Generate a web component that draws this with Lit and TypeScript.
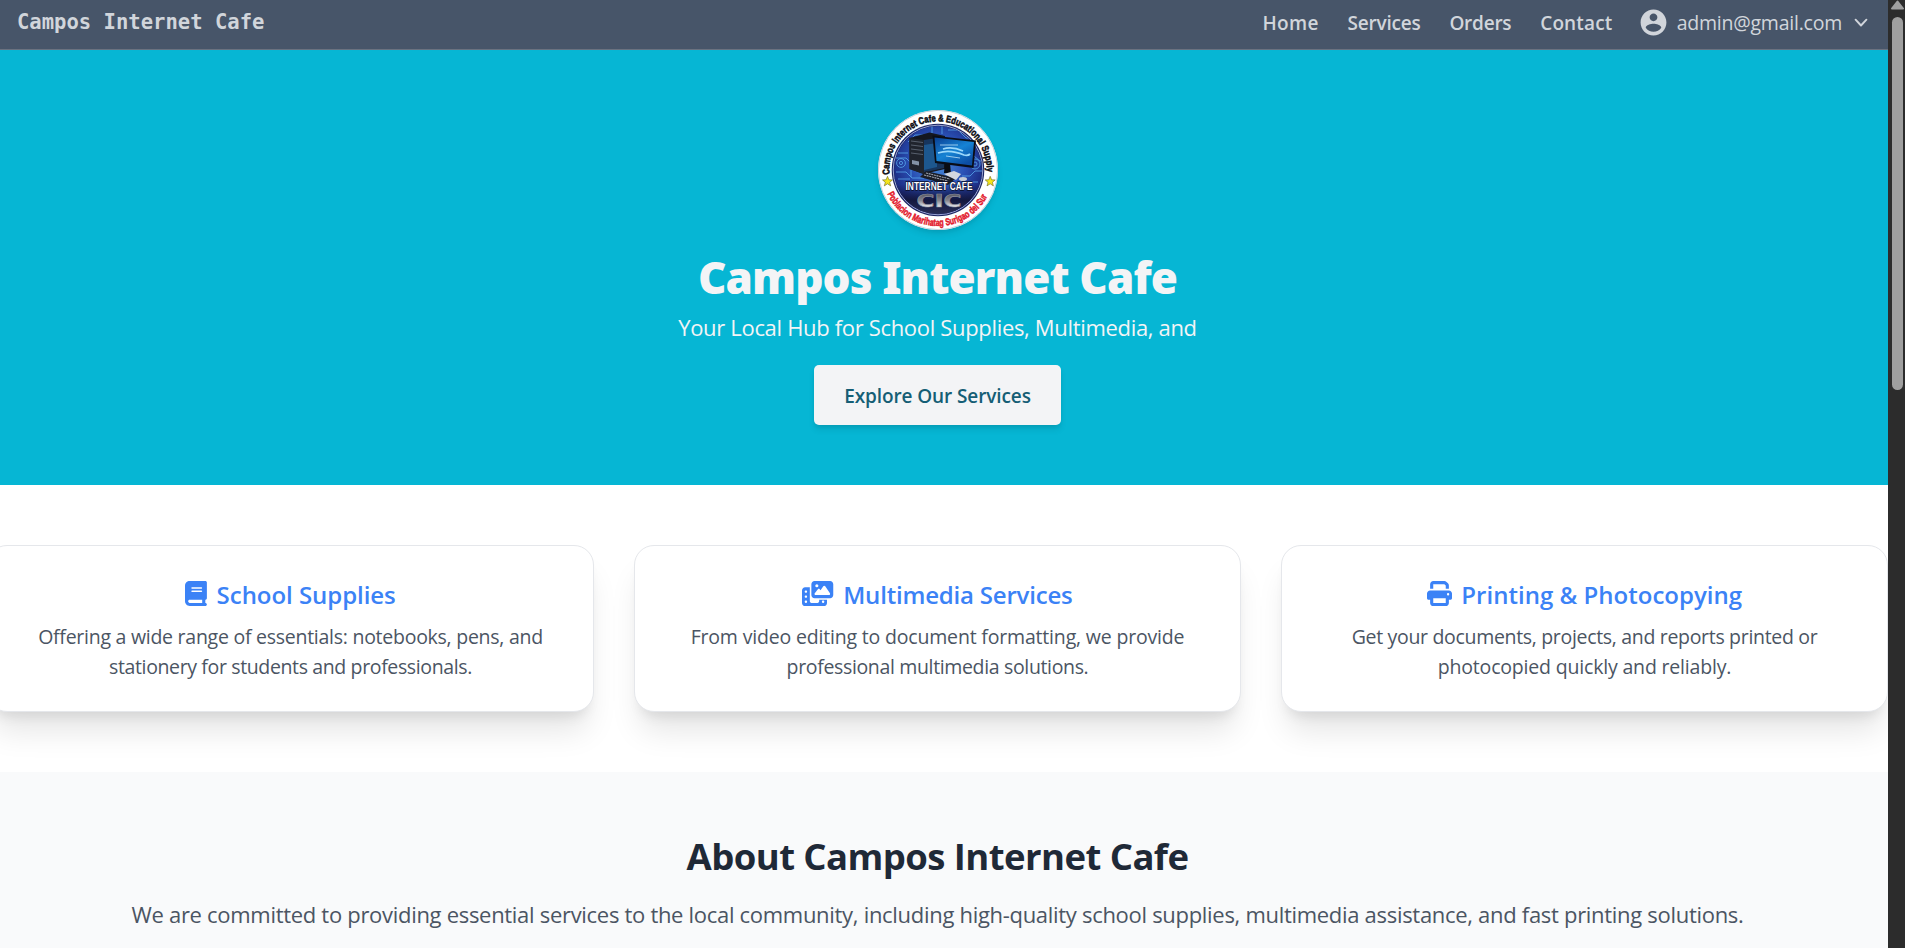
import { LitElement, html, css, svg } from "lit";
import { customElement } from "lit/decorators.js";
import { styleMap } from "lit/directives/style-map.js";

const pen = document.createElement("canvas").getContext("2d")!;

/* Sets one line of text, tracked so that it comes out at the given width. */
function line(text: string, width: number, font: string) {
  pen.font = font;
  const m = pen.measureText(text);
  const natural = m.actualBoundingBoxLeft + m.actualBoundingBoxRight;
  const spacing = ((width - natural) / (text.length - 1)).toFixed(3);
  return html`<span class="line" style=${styleMap({ letterSpacing: `${spacing}px` })}>${text}</span>`;
}

const body = '400 19.5px "Open Sans"';
const lead = '400 22px "Open Sans"';
const nav = '600 19px "Open Sans"';
const cardTitle = '600 24px "Open Sans"';

const links: [string, number][] = [
  ["Home", 55],
  ["Services", 73],
  ["Orders", 61],
  ["Contact", 70.5],
];

interface Service {
  title: string;
  titleWidth: number;
  viewBox: string;
  iconWidth: number;
  icon: string;
  lines: [string, number][];
}

const services: Service[] = [
  {
    title: "School Supplies",
    titleWidth: 177.5,
    viewBox: "0 0 448 512",
    iconWidth: 21.9,
    icon: "M96 0C43 0 0 43 0 96L0 416c0 53 43 96 96 96l288 0 32 0c17.7 0 32-14.3 32-32s-14.3-32-32-32l0-64c17.7 0 32-14.3 32-32l0-320c0-17.7-14.3-32-32-32L384 0 96 0zm0 384l256 0 0 64L96 448c-17.7 0-32-14.3-32-32s14.3-32 32-32zm32-240c0-8.8 7.2-16 16-16l192 0c8.8 0 16 7.2 16 16s-7.2 16-16 16l-192 0c-8.8 0-16-7.2-16-16zm16 48l192 0c8.8 0 16 7.2 16 16s-7.2 16-16 16l-192 0c-8.8 0-16-7.2-16-16s7.2-16 16-16z",
    lines: [
      ["Offering a wide range of essentials: notebooks, pens, and", 503],
      ["stationery for students and professionals.", 362.2],
    ],
  },
  {
    title: "Multimedia Services",
    titleWidth: 226.9,
    viewBox: "0 0 640 512",
    iconWidth: 31.25,
    icon: "M256 0H576c35.3 0 64 28.7 64 64V288c0 35.3-28.7 64-64 64H256c-35.3 0-64-28.7-64-64V64c0-35.3 28.7-64 64-64zM476 106.7C471.5 100 464 96 456 96s-15.5 4-20 10.7l-56 84L362.7 169c-4.6-5.7-11.5-9-18.7-9s-14.2 3.3-18.7 9l-64 80c-5.8 7.2-6.9 17.1-2.9 25.4s12.4 13.6 21.6 13.6h80 48H552c8.9 0 17-4.9 21.2-12.7s3.7-17.3-1.2-24.6l-96-144zM336 96a32 32 0 1 0 -64 0 32 32 0 1 0 64 0zM64 128h96V384v32c0 17.7 14.3 32 32 32H320c17.7 0 32-14.3 32-32V384H512v64c0 35.3-28.7 64-64 64H64c-35.3 0-64-28.7-64-64V192c0-35.3 28.7-64 64-64zm8 64c-8.8 0-16 7.2-16 16v16c0 8.8 7.2 16 16 16H88c8.8 0 16-7.2 16-16V208c0-8.8-7.2-16-16-16H72zm0 104c-8.8 0-16 7.2-16 16v16c0 8.8 7.2 16 16 16H88c8.8 0 16-7.2 16-16V312c0-8.8-7.2-16-16-16H72zm0 104c-8.8 0-16 7.2-16 16v16c0 8.8 7.2 16 16 16H88c8.8 0 16-7.2 16-16V416c0-8.8-7.2-16-16-16H72zm336 16v16c0 8.8 7.2 16 16 16h16c8.8 0 16-7.2 16-16V416c0-8.8-7.2-16-16-16H424c-8.8 0-16 7.2-16 16z",
    lines: [
      ["From video editing to document formatting, we provide", 491.9],
      ["professional multimedia solutions.", 300],
    ],
  },
  {
    title: "Printing & Photocopying",
    titleWidth: 278.5,
    viewBox: "0 0 512 512",
    iconWidth: 25,
    icon: "M128 0C92.7 0 64 28.7 64 64v96h64V64H354.7L384 93.3V160h64V93.3c0-17-6.7-33.3-18.7-45.3L400 18.7C388 6.7 371.7 0 354.7 0H128zM384 352v32 64H128V384 368 352H384zm64 32h32c17.7 0 32-14.3 32-32V256c0-35.3-28.7-64-64-64H64c-35.3 0-64 28.7-64 64v96c0 17.7 14.3 32 32 32H64v64c0 35.3 28.7 64 64 64H384c35.3 0 64-28.7 64-64V384zM432 248a24 24 0 1 1 0 48 24 24 0 1 1 0-48z",
    lines: [
      ["Get your documents, projects, and reports printed or", 465],
      ["photocopied quickly and reliably.", 291.5],
    ],
  },
];

@customElement("cafe-logo")
class CafeLogo extends LitElement {
  static styles = css`
    :host { display: block; width: 120px; height: 120px; border-radius: 50%;
      box-shadow: 0 5px 7.5px -1.25px rgba(0,0,0,.1), 0 2.5px 5px -2.5px rgba(0,0,0,.1); }
    svg { display: block; }
    .ring { font: 700 9.8px "Liberation Sans", sans-serif; }
    .top { fill: #0b0b12; stroke: #0b0b12; stroke-width: .55; }
    .bottom { fill: #e3182b; stroke: #e3182b; stroke-width: .5; }
    .name { font: 700 10.5px "Liberation Sans", sans-serif; fill: #fff; stroke: #0a0d2a; stroke-width: 1.4; paint-order: stroke; }
    .cic { font: 700 18.5px "DejaVu Sans", sans-serif; fill: url(#silver); stroke: #8d8f9c; stroke-width: .6; }
  `;
  render() {
    const star = "M0-5.2 1.4-1.7 5-1.6 2.2.8 3.2 4.4 0 2.3-3.2 4.4-2.2.8-5-1.6-1.4-1.7Z";
    return html`<svg width="120" height="120" viewBox="0 0 120 120">
      <defs>
        <radialGradient id="core" cx=".5" cy=".42" r=".58">
          <stop offset="0" stop-color="#4a90de" /><stop offset=".55" stop-color="#2a50b4" /><stop offset="1" stop-color="#1a2478" />
        </radialGradient>
        <linearGradient id="floor" x2="0" y2="1">
          <stop offset="0" stop-color="#12194a" stop-opacity="0" /><stop offset=".5" stop-color="#14183f" /><stop offset="1" stop-color="#2b3158" />
        </linearGradient>
        <linearGradient id="screen" x2=".7" y2="1">
          <stop offset="0" stop-color="#0a3f93" /><stop offset=".55" stop-color="#1683d4" /><stop offset="1" stop-color="#0c4da3" />
        </linearGradient>
        <linearGradient id="silver" x2="0" y2="1">
          <stop offset="0" stop-color="#3b3c47" /><stop offset=".5" stop-color="#85868f" /><stop offset=".8" stop-color="#e8e8ec" /><stop offset="1" stop-color="#92939c" />
        </linearGradient>
        <clipPath id="disc"><circle cx="60" cy="60" r="44" /></clipPath>
        <path id="over" d="M11.500 64.500A48.700 48.700 0 1 1 108.500 64.500" />
        <path id="under" d="M9.200 83.700A56 56 0 0 0 109.900 85.400" />
      </defs>
      <circle cx="60" cy="60" r="60" fill="#fff" />
      <circle cx="60" cy="60" r="59.600" fill="none" stroke="#b9c4cf" stroke-width=".8" />
      <circle cx="60" cy="60" r="46.300" fill="#1c2563" />
      <circle cx="60" cy="60" r="44.800" fill="none" stroke="#aab6e2" stroke-width=".9" />
      <g clip-path="url(#disc)">
        <circle cx="60" cy="60" r="44" fill="url(#core)" />
        <g fill="none" stroke="#5fb3f4" stroke-width=".9" opacity=".8">
          <path d="M16 48h12l5 5v14M18 62h10l6 6h12M20 43h10M88 46h8l6 5h4M84 66h8l5-5h9M30 32l7-7h8M70 20h10l8 8h6M64 16v8M54 16v7M88 72h12M20 69h12" />
          <circle cx="23" cy="53" r="4.400" /><circle cx="23" cy="53" r="1.600" />
          <circle cx="97" cy="54" r="5" /><circle cx="97" cy="54" r="2" />
        </g>
        <path d="M14 74h92v32H14z" fill="url(#floor)" />
      </g>
      <path d="m31.500 28 20-5.500L67 26v33L45.500 64 31.500 59Z" fill="#14171f" />
      <path d="m46 30 20-3v31L46 62.500Z" fill="#17355d" />
      <path d="m46 35 13-2v24l-13 3Z" fill="#2166a4" opacity=".7" />
      <path d="m31.500 28 14.500 2v34l-14.500-5Z" fill="#20242d" />
      <path d="m33 31 12 1.500M33 35l12 1.500M33 39l12 1.500M33 43l12 1.500" stroke="#5d6675" stroke-width=".9" />
      <path d="m34 50 7 1.500v4L34 54Z" fill="#8493a7" />
      <path d="m67 52 5 1 1 11-7-1Z" fill="#090c13" />
      <path d="m54.500 25.500 43.500 5-2.500 27.500-38.500-5Z" fill="#090d17" />
      <path d="m56.500 27.500 39.500 4.500-2 23.500-35.500-4.500Z" fill="url(#screen)" />
      <path d="M65 39q9-3 20 2M60 43q12-4 26 2 4 1 6-1" stroke="#9bd8fb" stroke-width="1.800" fill="none" />
      <path d="M62 35h18M68 46l14 2" stroke="#d2f0ff" stroke-width="1" opacity=".7" />
      <path d="m48 61 30 7-8 7-28-8Z" fill="#1a1d27" />
      <path d="m48 63 24 6M46 65l24 6" stroke="#9da3b0" stroke-width="1.100" stroke-dasharray="2 .7" />
      <path d="m66 64 10-3 7 3-5 6Z" fill="#d3d7df" />
      <ellipse cx="85" cy="69" rx="4" ry="2" fill="#c5cbd6" />
      <text class="name" x="27.500" y="79.800" textLength="67" lengthAdjust="spacingAndGlyphs">INTERNET CAFE</text>
      <text class="cic" x="38.500" y="97" textLength="45" lengthAdjust="spacingAndGlyphs">CIC</text>
      <text class="ring top"><textPath href="#over" textLength="159" lengthAdjust="spacingAndGlyphs">Campos Internet Cafe &amp; Educational Supply</textPath></text>
      <text class="ring bottom"><textPath href="#under" textLength="124" lengthAdjust="spacingAndGlyphs">Poblacion Marihatag Surigao del Sur</textPath></text>
      ${[[9.5, 71.5], [112.2, 71.5]].map(
        ([x, y]) => svg`<path d=${star} transform="translate(${x} ${y})" fill="#f5e51b" stroke="#6a6722" stroke-width=".6" />`
      )}
    </svg>`;
  }
}

@customElement("app-root")
class AppRoot extends LitElement {
  static styles = css`
    :host { display: flex; height: 948px; overflow: hidden; font-family: "Open Sans", "Noto Sans", sans-serif; background: #fff; }
    * { box-sizing: border-box; }
    h1, h2, h3, p { margin: 0; }
    svg { display: block; flex: none; }
    .line { white-space: nowrap; }
    .viewport { flex: 1; min-width: 0; overflow: hidden; }
    .page { width: 1901px; margin-left: -13px; text-align: center; }

    .nav { display: flex; align-items: center; justify-content: space-between; height: 50px; padding: 0 17px 2px 30px;
      background: #475569; border-bottom: 1px solid #6b7280; color: #d1d5db; }
    .brand { font: 700 20.55px/30px "DejaVu Sans Mono", monospace; padding-bottom: 3px; }
    .menu { display: flex; align-items: center; gap: 28.8px; padding-bottom: 1px; font-size: 19px; line-height: 30px; font-weight: 600; }
    .user { display: flex; align-items: center; margin-left: -3.5px; font-weight: 400; font-size: 19.5px; }
    .user .line { margin: 0 9px 0 8px; }
    .menu a { color: inherit; text-decoration: none; }
    .avatar { margin-bottom: 1px; }

    .hero { display: flex; flex-direction: column; align-items: center; height: 435px; padding: 60px 0; background: #06b6d4; color: #f3f4f6; }
    .hero h1 { height: 50px; margin-top: 20px; font: 900 44px/54px "Noto Sans", sans-serif; }
    .hero p { margin-top: 10px; font-size: 22px; line-height: 35px; }
    .cta { display: flex; align-items: center; justify-content: center; margin-top: 20px; width: 247px; height: 60px; padding: 2px 0 0; border: 0; border-radius: 5px;
      background: #f3f4f6; color: #155e75; font: 600 19px/30px "Open Sans", sans-serif;
      box-shadow: 0 5px 7.5px -1.25px rgba(0,0,0,.1), 0 2.5px 5px -2.5px rgba(0,0,0,.1); }

    .services { display: grid; grid-template-columns: repeat(3, 607px); gap: 40px; padding: 60px 0; background: #fff; }
    .card { height: 167px; padding: 30px 0; border: 1px solid #e5e7eb; border-radius: 20px; background: #fff;
      box-shadow: 0 25px 31.25px -6.25px rgba(0,0,0,.1), 0 10px 12.5px -7.5px rgba(0,0,0,.1); }
    .card h3 { display: flex; align-items: center; justify-content: center; gap: 9.5px; height: 35px; color: #3b82f6; font-size: 24px; line-height: 35px; font-weight: 600; }
    .card h3 .line { padding-top: 1px; }
    .card p { margin-top: 11px; color: #4b5563; font-size: 19.5px; line-height: 30px; }
    .card p .line { display: block; }

    .about { height: 176px; padding: 60px 0 0; background: #f9fafb; }
    .about h2 { color: #1f2937; font-size: 36.5px; line-height: 49px; height: 45px; font-weight: 700; }
    .about p { margin-top: 20px; color: #4b5563; font-size: 22px; line-height: 35px; }

    .scrollbar { display: flex; flex-direction: column; align-items: center; width: 17px; flex: none; background: #2c2c2c; padding-left: 1px; }
    .thumb { width: 11px; height: 373px; margin-top: 7px; border-radius: 6px; background: #9f9f9f; }
  `;

  render() {
    return html`
      <div class="viewport"><div class="page">
        <header class="nav">
          <div class="brand">Campos Internet Cafe</div>
          <nav class="menu">
            ${links.map(([t, w]) => html`<a>${line(t, w, nav)}</a>`)}
            <div class="user">
              <svg class="avatar" width="31" height="31" viewBox="0 0 24 24" fill="currentColor"><path d="M12 2C6.480 2 2 6.480 2 12s4.480 10 10 10 10-4.480 10-10S17.520 2 12 2zm0 3c1.660 0 3 1.340 3 3s-1.340 3-3 3-3-1.340-3-3 1.340-3 3-3zm0 14.200c-2.500 0-4.710-1.280-6-3.220.03-1.990 4-3.080 6-3.080 1.990 0 5.970 1.090 6 3.080-1.290 1.940-3.500 3.220-6 3.220z" /></svg>
              ${line("admin@gmail.com", 164.5, body)}
              <svg width="20" height="20" viewBox="0 0 24 24" fill="none" stroke="currentColor" stroke-width="2.300" stroke-linecap="round" stroke-linejoin="round"><path d="m5.500 8 6.500 7 6.500-7" /></svg>
            </div>
          </nav>
        </header>
        <section class="hero">
          <cafe-logo></cafe-logo>
          <h1>${line("Campos Internet Cafe", 476.8, '900 44px "Noto Sans"')}</h1>
          <p>${line("Your Local Hub for School Supplies, Multimedia, and", 517.4, lead)}</p>
          <button class="cta">${line("Explore Our Services", 185.4, nav)}</button>
        </section>
        <section class="services">
          ${services.map(
            (s) => html`<article class="card">
              <h3>
                <svg width=${s.iconWidth} height="25" viewBox=${s.viewBox} fill="currentColor"><path d=${s.icon} /></svg>
                ${line(s.title, s.titleWidth, cardTitle)}
              </h3>
              <p>${s.lines.map(([t, w]) => line(t, w, body))}</p>
            </article>`
          )}
        </section>
        <section class="about">
          <h2>${line("About Campos Internet Cafe", 500.9, '700 36.5px "Open Sans"')}</h2>
          <p>${line("We are committed to providing essential services to the local community, including high-quality school supplies, multimedia assistance, and fast printing solutions.", 1611.5, lead)}</p>
        </section>
      </div></div>
      <div class="scrollbar">
        <svg width="15" height="10" viewBox="0 0 15 10"><path d="M7.500 1.500 13 8.500H2Z" fill="#9f9f9f" stroke="#9f9f9f" stroke-width="2" stroke-linejoin="round" /></svg>
        <div class="thumb"></div>
      </div>`;
  }
}
